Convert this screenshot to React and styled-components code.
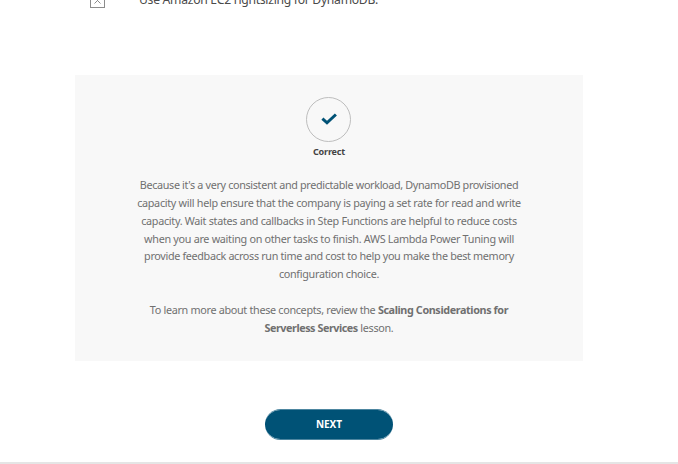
import React from "react";
import styled, { createGlobalStyle } from "styled-components";

const GlobalStyle = createGlobalStyle`
  * { box-sizing: border-box; }
  body { margin: 0; background: #fff; overflow: hidden; font-family: "Noto Sans", "Open Sans", sans-serif; }
`;
const Page = styled.main`
  width: 678px;
  height: 464px;
  display: flex;
  flex-direction: column;
  overflow: hidden;
  border-bottom: 2px solid #e5e5e5;
`;
const Answer = styled.div`
  display: flex;
  height: 75px;
  flex: none;
  padding-left: 90px;
`;
const Box = styled.svg`
  display: block;
  width: 15px;
  height: 15px;
  margin-top: -7px;
`;
const AnswerText = styled.div`
  margin: -10px 0 0 34px;
  font-size: 12.2px;
  line-height: 20px;
  letter-spacing: -0.3px;
  color: #4a4a4a;
  white-space: nowrap;
`;
const Feedback = styled.section`
  width: 508px;
  height: 286px;
  flex: none;
  margin-left: 75px;
  padding-top: 22px;
  background: #f8f8f8;
  display: flex;
  flex-direction: column;
  align-items: center;
`;
const Check = styled.svg`
  display: block;
  width: 45px;
  height: 45px;
  margin-right: 1px;
`;
const Status = styled.div`
  margin-top: 3px;
  height: 14px;
  line-height: 14px;
  font-size: 9px;
  font-weight: 700;
  letter-spacing: -0.15px;
  color: #444;
`;
const Copy = styled.div`
  margin-top: 17px;
  color: #707070;
  font-size: 10.8px;
  line-height: 17.85px;
`;
const Paragraph = styled.p`
  margin: 0 0 17.85px;
  text-align: center;
`;
const Line = styled.span`
  display: block;
  white-space: nowrap;
  letter-spacing: ${(p) => p.$spacing}px;
`;
const Strong = styled.strong`
  font-weight: 700;
  letter-spacing: ${(p) => p.$spacing}px;
`;
const Actions = styled.div`
  width: 508px;
  margin: 48px 0 0 75px;
  display: flex;
  justify-content: center;
`;
const NextButton = styled.button`
  width: 128px;
  height: 31px;
  padding: 0;
  border: 1px solid #4d86a0;
  border-width: 1px 0;
  border-radius: 16px;
  background: #005276;
  background-clip: padding-box;
  color: #fff;
  font: 700 10px/29px "Noto Sans", sans-serif;
  letter-spacing: -0.1px;
`;

export default function App() {
  return (
    <>
      <GlobalStyle />
      <Page>
        <Answer>
          <Box viewBox="0 0 15 15" fill="none">
            <rect x="0.5" y="0.5" width="14" height="14" stroke="#8c8c8c" />
            <path d="M4.5 4.5l6 6M10.5 4.5l-6 6" stroke="#8c8c8c" />
          </Box>
          <AnswerText>Use Amazon EC2 rightsizing for DynamoDB.</AnswerText>
        </Answer>
        <Feedback>
          <Check viewBox="0 0 45 45" fill="none">
            <circle cx="22.5" cy="22.5" r="22" stroke="#bdbdbd" />
            <path d="M16.4 21.6l4.6 4.2 8.9-8.3" stroke="#005276" strokeWidth="3" />
          </Check>
          <Status>Correct</Status>
          <Copy>
            <Paragraph>
              <Line $spacing={-0.345}>Because it's a very consistent and predictable workload, DynamoDB provisioned</Line>
              <Line $spacing={-0.294}>capacity will help ensure that the company is paying a set rate for read and write</Line>
              <Line $spacing={-0.295}>capacity. Wait states and callbacks in Step Functions are helpful to reduce costs</Line>
              <Line $spacing={-0.297}>when you are waiting on other tasks to finish. AWS Lambda Power Tuning will</Line>
              <Line $spacing={-0.336}>provide feedback across run time and cost to help you make the best memory</Line>
              <Line $spacing={-0.3}>configuration choice.</Line>
            </Paragraph>
            <Paragraph>
              <Line $spacing={-0.31}>To learn more about these concepts, review the <Strong $spacing={-0.39}>Scaling Considerations for</Strong></Line>
              <Line $spacing={-0.31}><Strong $spacing={-0.46}>Serverless Services</Strong> lesson.</Line>
            </Paragraph>
          </Copy>
        </Feedback>
        <Actions><NextButton>NEXT</NextButton></Actions>
      </Page>
    </>
  );
}
